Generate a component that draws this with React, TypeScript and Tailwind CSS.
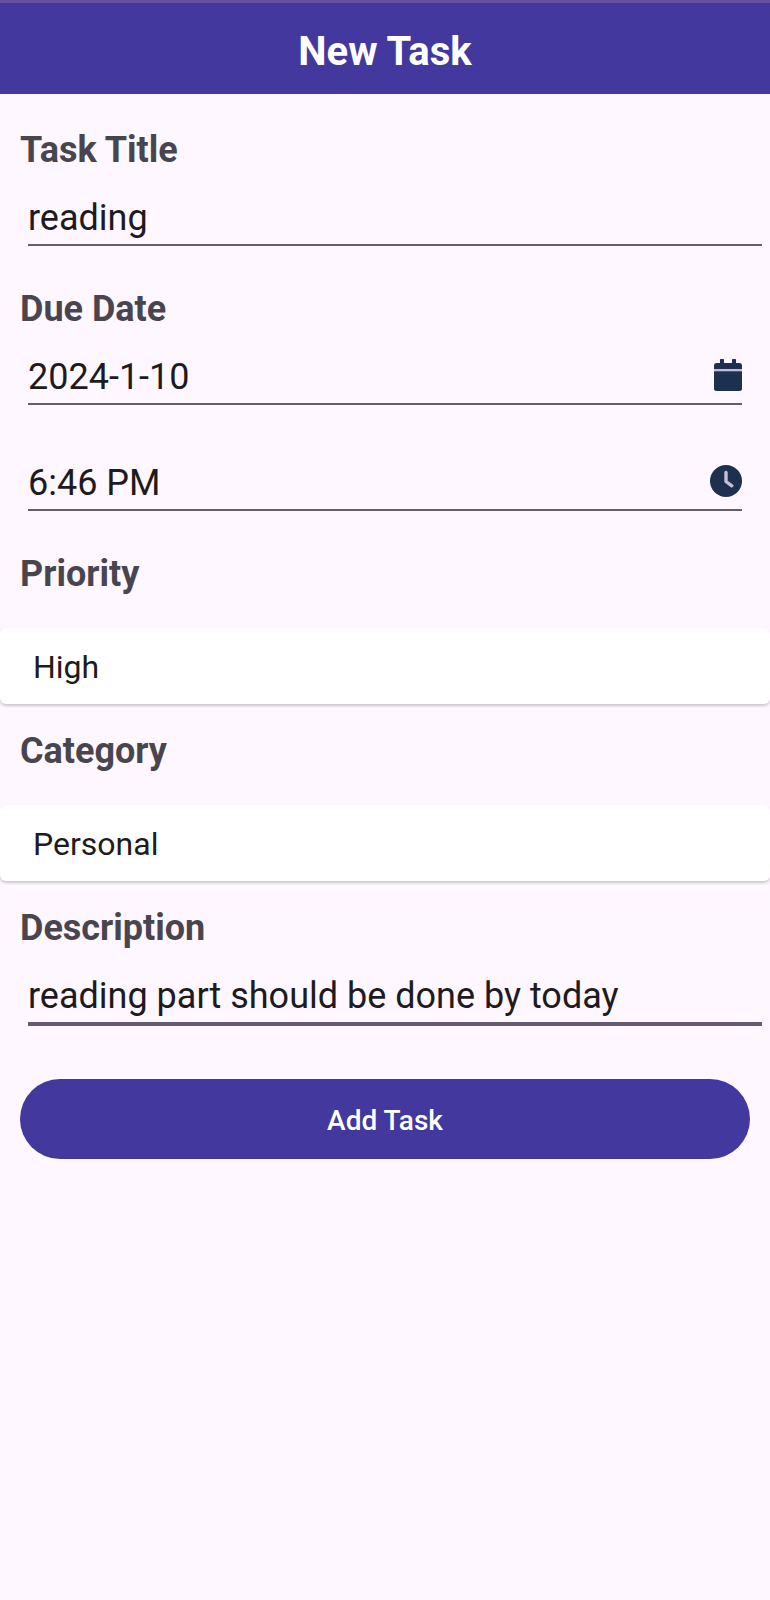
import { useState } from "react";
import type { ReactNode } from "react";

function CalendarIcon() {
  return (
    <svg viewBox="0 0 28 32" className="h-8 w-7" aria-hidden="true">
      <path
        fill="#1d3050"
        d="M0 12h28v17.500a2.500 2.500 0 0 1-2.500 2.500H2.500A2.500 2.500 0 0 1 0 29.500zM28 10V6.500A2.500 2.500 0 0 0 25.500 4H22V.8a.8.8 0 0 0-.8-.8h-2.400a.8.8 0 0 0-.8.8V4h-8V.8a.8.8 0 0 0-.8-.8H6.800a.8.8 0 0 0-.8.8V4H2.500A2.500 2.500 0 0 0 0 6.500V10z"
      />
      <path fill="#c3c0d4" d="M0 10h28v2.300H0z" />
    </svg>
  );
}

function ClockIcon() {
  return (
    <svg viewBox="0 0 32 32" className="size-8" aria-hidden="true">
      <circle cx="16" cy="16" r="16" fill="#1d3050" />
      <path d="M16 7.500V16.500l5.800 4.300" fill="none" stroke="#c3c0d4" strokeWidth="3.400" strokeLinecap="round" strokeLinejoin="round" />
    </svg>
  );
}

function Label({ htmlFor, children }: { htmlFor: string; children: ReactNode }) {
  return (
    <label htmlFor={htmlFor} className="block px-5 pb-px text-[36px] leading-[44px] font-bold text-[#49454f]">
      {children}
    </label>
  );
}

const inputText =
  "block h-[71px] w-full min-w-0 bg-transparent pt-[23px] pb-1 text-[36px] leading-[44px] text-[#1d1b20] outline-none";

function PickerField({ id, label, initial, icon }: { id: string; label: string; initial: string; icon: ReactNode }) {
  const [value, setValue] = useState(initial);
  return (
    <div className="mx-7 flex items-center border-b-2 border-[#625f66]">
      <input id={id} aria-label={label} className={inputText} value={value} onChange={(e) => setValue(e.target.value)} />
      <button type="button" aria-label={"Choose " + label.toLowerCase()} className="mt-[15px] shrink-0">
        {icon}
      </button>
    </div>
  );
}

function SelectCard({ id, options }: { id: string; options: string[] }) {
  return (
    <select
      id={id}
      defaultValue={options[0]}
      className="mt-[31px] mb-[25px] block h-[76px] w-full appearance-none rounded-md bg-white px-[33px] pt-[2px] text-[32px] text-[#1d1b20] shadow-[0_2px_3px_rgba(0,0,0,0.2)] outline-none"
    >
      {options.map((option) => (
        <option key={option}>{option}</option>
      ))}
    </select>
  );
}

export default function App() {
  const [title, setTitle] = useState("reading");
  const [description, setDescription] = useState("reading part should be done by today");

  return (
    <div className="min-h-screen bg-[#fef7ff] font-[Roboto,sans-serif]">
      <header className="flex h-[94px] items-center justify-center border-t-3 border-[#6650a4] bg-[#42389d] pt-1.5">
        <h1 className="text-[40px] leading-[48px] font-bold text-white">New Task</h1>
      </header>
      <form className="pt-[34px]" onSubmit={(e) => e.preventDefault()}>
        <Label htmlFor="title">Task Title</Label>
        <div className="mr-2 mb-[41px] ml-7 border-b-2 border-[#625f66]">
          <input id="title" className={inputText} value={title} onChange={(e) => setTitle(e.target.value)} />
        </div>

        <Label htmlFor="date">Due Date</Label>
        <div className="mb-[41px] flex flex-col gap-[33px]">
          <PickerField id="date" label="Due Date" initial="2024-1-10" icon={<CalendarIcon />} />
          <PickerField id="time" label="Due Time" initial="6:46 PM" icon={<ClockIcon />} />
        </div>

        <Label htmlFor="priority">Priority</Label>
        <SelectCard id="priority" options={["High", "Medium", "Low"]} />

        <Label htmlFor="category">Category</Label>
        <SelectCard id="category" options={["Personal", "Work", "Other"]} />

        <Label htmlFor="description">Description</Label>
        <div className="mr-2 ml-7 border-b-4 border-[#655a70]">
          <input
            id="description"
            className={inputText}
            value={description}
            onChange={(e) => setDescription(e.target.value)}
          />
        </div>

        <div className="px-5 pt-[53px]">
          <button type="submit" className="h-20 w-full rounded-full bg-[#42389d] pt-1 text-[28px] font-medium text-white">
            Add Task
          </button>
        </div>
      </form>
    </div>
  );
}
